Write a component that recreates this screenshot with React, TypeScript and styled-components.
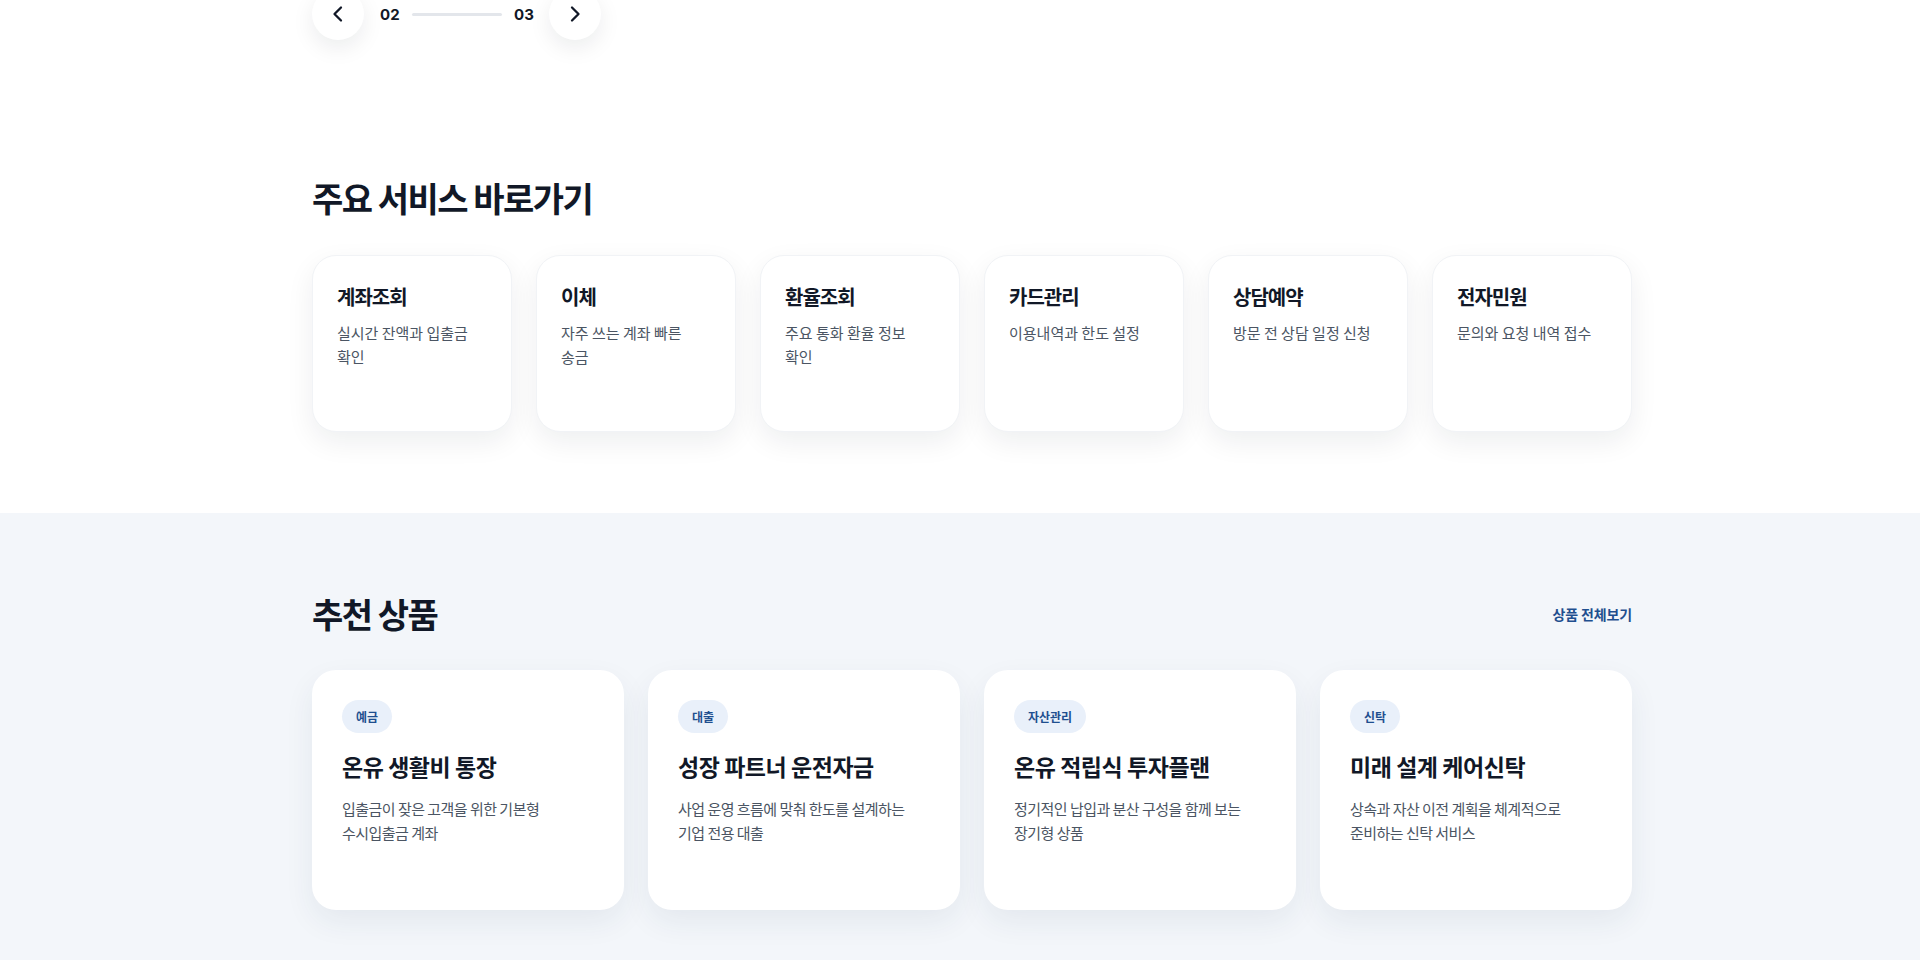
import React from "react";
import styled, { createGlobalStyle } from "styled-components";

const GlobalStyle = createGlobalStyle`
  * { box-sizing: border-box; }
  html, body { margin: 0; padding: 0; background: #ffffff; }
  body {
    font-family: Inter, "Noto Sans CJK KR", "Noto Sans", sans-serif;
    color: #111827;
    word-break: keep-all;
    -webkit-font-smoothing: antialiased;
  }
`;

const Page = styled.div`
  width: 100%;
  overflow: hidden;
`;

const Section = styled.section<{ $bg?: string; $pt: number; $pb: number }>`
  background: ${(p) => p.$bg ?? "#ffffff"};
  padding: ${(p) => p.$pt}px 0 ${(p) => p.$pb}px 24px;
`;

const Container = styled.div`
  max-width: 1320px;
  margin: 0 auto;
`;

const Controls = styled.div`
  display: flex;
  align-items: center;
  margin-top: -12px;
`;

const RoundButton = styled.button`
  width: 52px;
  height: 52px;
  border-radius: 50%;
  border: none;
  background: #ffffff;
  box-shadow: 0 8px 22px rgba(15, 23, 42, 0.08);
  display: flex;
  align-items: center;
  justify-content: center;
  padding: 0;
  cursor: pointer;
  color: #111827;
`;

const Count = styled.span<{ $ml: number; $mr: number }>`
  font-family: Inter, "Noto Sans CJK KR", sans-serif;
  font-size: 15px;
  font-weight: 700;
  color: #111827;
  margin: 0 ${(p) => p.$mr}px 0 ${(p) => p.$ml}px;
  letter-spacing: 0.01em;
`;

const Track = styled.div`
  width: 90px;
  height: 3px;
  border-radius: 2px;
  background: #e3e6eb;
`;

const SectionTitle = styled.h2`
  margin: 0;
  font-family: "Noto Sans CJK KR", sans-serif;
  font-size: 34px;
  line-height: 42px;
  font-weight: 700;
  letter-spacing: -0.045em;
  color: #111827;
`;

const Header = styled.div<{ $mb: number }>`
  display: flex;
  align-items: center;
  justify-content: space-between;
  margin-bottom: ${(p) => p.$mb}px;
`;

const MoreLink = styled.a`
  font-family: "Noto Sans CJK KR", sans-serif;
  font-size: 14px;
  font-weight: 700;
  letter-spacing: -0.01em;
  color: #1f4f8f;
  text-decoration: none;
`;

const ServiceGrid = styled.div`
  display: grid;
  grid-template-columns: repeat(6, 1fr);
  gap: 24px;
`;

const ServiceCard = styled.a`
  display: flex;
  flex-direction: column;
  gap: 10px;
  min-height: 177px;
  padding: 27px 24px;
  background: #ffffff;
  border-radius: 24px;
  border: 1px solid #f1f3f6;
  box-shadow: 0 10px 28px rgba(15, 23, 42, 0.07);
  text-decoration: none;
`;

const ServiceName = styled.h3`
  margin: 0;
  font-family: "Noto Sans CJK KR", sans-serif;
  font-size: 20px;
  line-height: 28px;
  font-weight: 700;
  letter-spacing: -0.05em;
  color: #111827;
`;

const ServiceDesc = styled.p`
  margin: 0;
  font-family: "Noto Sans CJK KR", sans-serif;
  font-size: 15px;
  line-height: 24px;
  font-weight: 400;
  letter-spacing: 0;
  color: #4b5563;
`;

const ProductGrid = styled.div`
  display: grid;
  grid-template-columns: repeat(4, 1fr);
  gap: 24px;
`;

const ProductCard = styled.a`
  display: flex;
  flex-direction: column;
  align-items: flex-start;
  min-height: 240px;
  padding: 30px;
  background: #ffffff;
  border-radius: 24px;
  box-shadow: 0 12px 30px rgba(30, 50, 90, 0.07);
  text-decoration: none;
`;

const Badge = styled.span`
  display: inline-block;
  padding: 8px 14px;
  border-radius: 999px;
  background: #e9f0fa;
  font-family: "Noto Sans CJK KR", sans-serif;
  font-size: 12px;
  line-height: 17px;
  font-weight: 700;
  letter-spacing: 0;
  color: #1f4f8f;
  margin-bottom: 18px;
`;

const ProductName = styled.h3`
  margin: 0 0 16px;
  font-family: "Noto Sans CJK KR", sans-serif;
  font-size: 23px;
  line-height: 30px;
  font-weight: 700;
  letter-spacing: -0.02em;
  color: #111827;
`;

const ProductDesc = styled.p`
  margin: 0;
  font-family: "Noto Sans CJK KR", sans-serif;
  font-size: 15px;
  line-height: 24px;
  font-weight: 400;
  letter-spacing: -0.035em;
  color: #4b5563;
`;

const Chevron = ({ dir }: { dir: "left" | "right" }) => (
  <svg width="24" height="24" viewBox="0 0 24 24" fill="none" stroke="currentColor" strokeWidth="2.3" strokeLinecap="round" strokeLinejoin="round">
    {dir === "left" ? <path d="M15 5.5L8.5 12l6.5 6.5" /> : <path d="M9 5.5l6.5 6.5L9 18.5" />}
  </svg>
);

const services = [
  { name: "계좌조회", desc: "실시간 잔액과 입출금 확인" },
  { name: "이체", desc: "자주 쓰는 계좌 빠른 송금" },
  { name: "환율조회", desc: "주요 통화 환율 정보 확인" },
  { name: "카드관리", desc: "이용내역과 한도 설정" },
  { name: "상담예약", desc: "방문 전 상담 일정 신청" },
  { name: "전자민원", desc: "문의와 요청 내역 접수" },
];

const products = [
  { tag: "예금", name: "온유 생활비 통장", desc: "입출금이 잦은 고객을 위한 기본형 수시입출금 계좌" },
  { tag: "대출", name: "성장 파트너 운전자금", desc: "사업 운영 흐름에 맞춰 한도를 설계하는 기업 전용 대출" },
  { tag: "자산관리", name: "온유 적립식 투자플랜", desc: "정기적인 납입과 분산 구성을 함께 보는 장기형 상품" },
  { tag: "신탁", name: "미래 설계 케어신탁", desc: "상속과 자산 이전 계획을 체계적으로 준비하는 신탁 서비스" },
];

export default function App() {
  return (
    <Page>
      <GlobalStyle />
      <Section $pt={0} $pb={57}>
        <Container>
          <Controls>
            <RoundButton aria-label="이전">
              <Chevron dir="left" />
            </RoundButton>
            <Count $ml={16} $mr={12}>02</Count>
            <Track />
            <Count $ml={12} $mr={15}>03</Count>
            <RoundButton aria-label="다음">
              <Chevron dir="right" />
            </RoundButton>
          </Controls>
        </Container>
      </Section>

      <Section $pt={80} $pb={81}>
        <Container>
          <Header $mb={36}>
            <SectionTitle>주요 서비스 바로가기</SectionTitle>
          </Header>
          <ServiceGrid>
            {services.map((s) => (
              <ServiceCard key={s.name} href="#">
                <ServiceName>{s.name}</ServiceName>
                <ServiceDesc>{s.desc}</ServiceDesc>
              </ServiceCard>
            ))}
          </ServiceGrid>
        </Container>
      </Section>

      <Section $bg="#f3f6fa" $pt={80} $pb={60}>
        <Container>
          <Header $mb={35}>
            <SectionTitle>추천 상품</SectionTitle>
            <MoreLink href="#">상품 전체보기</MoreLink>
          </Header>
          <ProductGrid>
            {products.map((p) => (
              <ProductCard key={p.name} href="#">
                <Badge>{p.tag}</Badge>
                <ProductName>{p.name}</ProductName>
                <ProductDesc>{p.desc}</ProductDesc>
              </ProductCard>
            ))}
          </ProductGrid>
        </Container>
      </Section>
    </Page>
  );
}
